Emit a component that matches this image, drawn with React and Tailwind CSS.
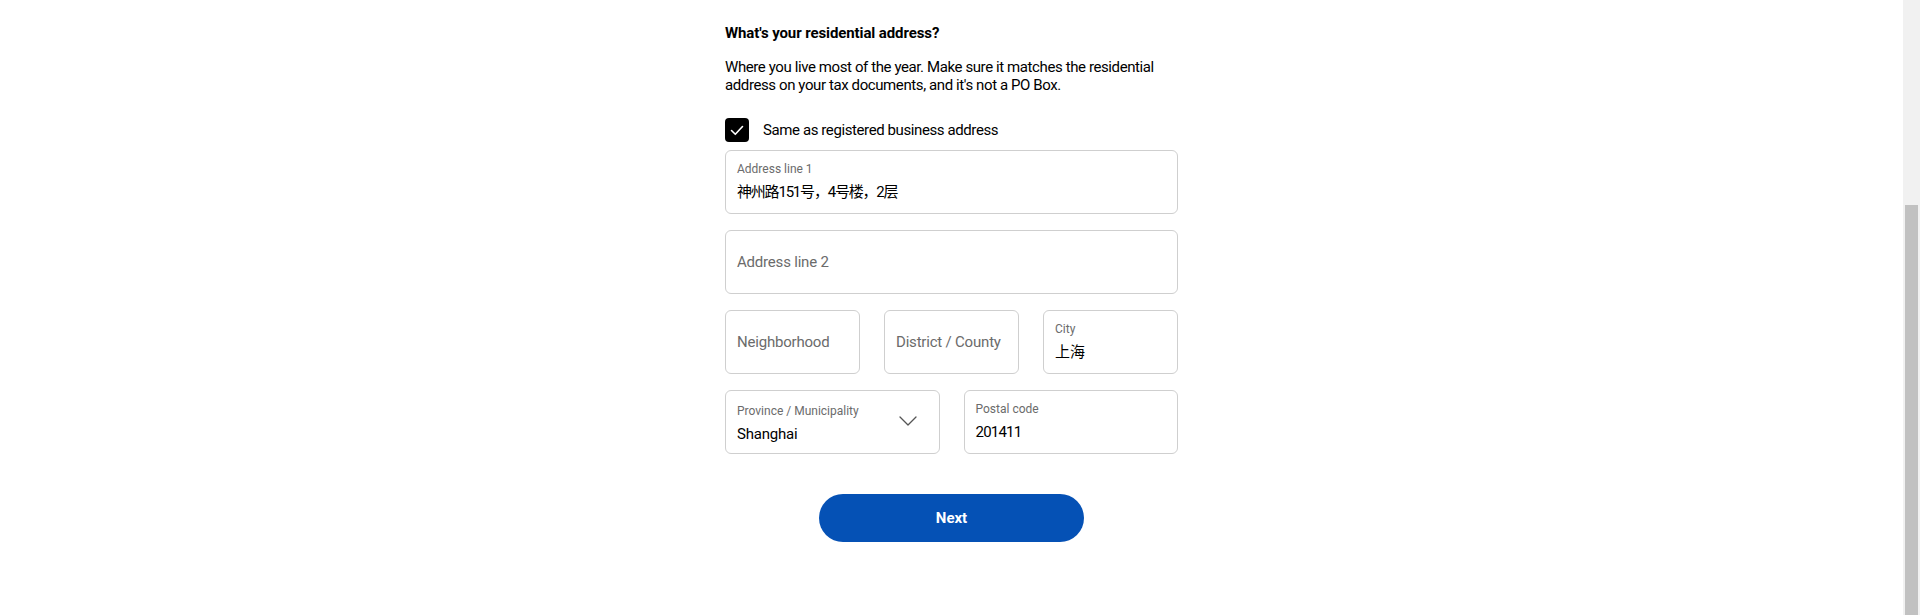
const font = { fontFamily: "Roboto, 'Noto Sans CJK SC', sans-serif" };

function Field({ label, value, valueClass = "", className = "" }) {
  return (
    <div className={`h-[64px] rounded-md border border-[#cfcfcf] bg-white px-[11px] pt-[10px] ${className}`}>
      <div className="text-[12px] leading-4 text-[#6b6b6b]">{label}</div>
      <div className={`mt-[5px] text-[15px] leading-5 text-black ${valueClass}`}>{value}</div>
    </div>
  );
}

function EmptyField({ placeholder, className = "" }) {
  return (
    <div className={`flex h-[64px] items-center rounded-md border border-[#cfcfcf] bg-white px-[11px] ${className}`}>
      <span className="whitespace-nowrap text-[15px] tracking-[-0.2px] text-[#6b6b6b]">{placeholder}</span>
    </div>
  );
}

export default function App() {
  return (
    <div className="flex h-[615px] w-full overflow-hidden bg-white" style={font}>
      <main className="flex flex-1 justify-center">
        <div className="w-[453px] pt-[23px]">
          <h2 className="text-[15px] font-bold leading-5 tracking-[-0.1px] text-black">What's your residential address?</h2>
          <p className="mt-[15px] text-[15px] leading-[18px] tracking-[-0.4px] text-black">
            Where you live most of the year. Make sure it matches the residential address on your tax documents, and it's not a PO Box.
          </p>

          {/* checkbox */}
          <label className="mt-[24px] flex items-center gap-[14px]">
            <span className="flex h-6 w-6 items-center justify-center rounded-[4px] bg-black">
              <svg width="14" height="11" viewBox="0 0 14 11" fill="none">
                <path d="M1.5 5.5l3.8 3.8L12.5 1.5" stroke="white" strokeWidth="1.6" strokeLinecap="round" strokeLinejoin="round" />
              </svg>
            </span>
            <span className="text-[15px] tracking-[-0.4px] text-black">Same as registered business address</span>
          </label>

          <div className="mt-2 flex flex-col gap-4">
            <Field label="Address line 1" value="神州路151号，4号楼，2层" valueClass="text-[14px] tracking-[-1.2px]" />
            <EmptyField placeholder="Address line 2" />
            <div className="grid grid-cols-3 gap-6">
              <EmptyField placeholder="Neighborhood" />
              <EmptyField placeholder="District / County" />
              <Field label="City" value="上海" valueClass="text-[14px]" />
            </div>
            <div className="grid grid-cols-2 gap-6">
              <div className="flex h-[64px] items-center justify-between rounded-md border border-[#cfcfcf] bg-white pl-[11px] pr-[22px]">
                <div className="pt-[2px]">
                  <div className="text-[12px] leading-4 text-[#6b6b6b]">Province / Municipality</div>
                  <div className="mt-[5px] text-[15px] leading-5 tracking-[-0.2px] text-black">Shanghai</div>
                </div>
                <svg width="18" height="10" viewBox="0 0 18 10" fill="none" className="mb-[2px]">
                  <path d="M1 1l8 8 8-8" stroke="#555" strokeWidth="1.3" strokeLinecap="round" strokeLinejoin="round" />
                </svg>
              </div>
              <Field label="Postal code" value="201411" valueClass="tracking-[-0.8px]" />
            </div>
          </div>

          <div className="mt-10 flex justify-center">
            <button className="h-12 w-[265px] rounded-full bg-[#0551b5] text-[15px] font-bold text-white">Next</button>
          </div>
        </div>
      </main>

      {/* scrollbar */}
      <div className="flex w-[17px] flex-col bg-[#f1f1f1] pt-[205px]">
        <div className="mx-[2px] flex-1 bg-[#c1c1c1]" />
      </div>
    </div>
  );
}
